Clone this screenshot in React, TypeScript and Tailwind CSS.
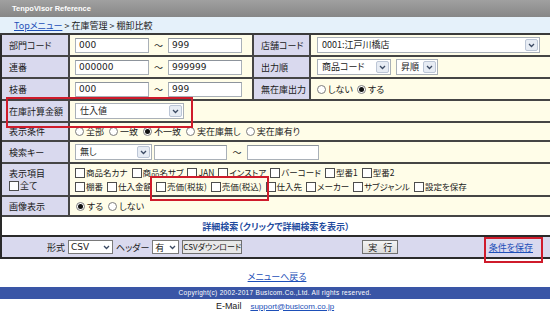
import type { ReactNode } from 'react'

function TextBox({ value, className }: { value?: string; className: string }) {
  return (
    <div
      className={`flex h-[15px] items-center border border-[#a9b0b8] border-t-[#8d949c] bg-white pl-[3px] font-['DejaVu_Sans',sans-serif] text-[9px] leading-[12px] text-[#222] ${className}`}
    >
      {value}
    </div>
  )
}

function Chevron() {
  return (
    <svg width="7" height="5" viewBox="0 0 7 5">
      <path d="M1 1 L3.5 3.5 L6 1" fill="none" stroke="#3b4a63" strokeWidth="1.3" />
    </svg>
  )
}

function Select({ value, className }: { value: string; className: string }) {
  return (
    <div className={`flex h-[16px] items-center border border-[#a9b0b8] bg-white pl-[4px] text-[9px] leading-[12px] text-[#222] ${className}`}>
      <span className="flex-1 whitespace-nowrap">{value}</span>
      <span className="mr-[1px] flex h-[12px] w-[13px] shrink-0 items-center justify-center rounded-[2px] border border-[#bcc6d6] bg-[#e7ecf4]">
        <Chevron />
      </span>
    </div>
  )
}

function Radio({ checked, label }: { checked?: boolean; label: string }) {
  return (
    <span className="flex items-center gap-[2px]">
      <span className="flex h-[9px] w-[9px] items-center justify-center rounded-full border border-[#7d7d7d] bg-white">
        {checked && <span className="h-[5px] w-[5px] rounded-full bg-[#111]" />}
      </span>
      <span>{label}</span>
    </span>
  )
}

function Check({ label }: { label: string }) {
  return (
    <span className="flex items-center gap-[1px]">
      <span className="h-[10px] w-[10px] border border-[#4d4d4d] bg-white" />
      <span>{label}</span>
    </span>
  )
}

function Label({ children, className = 'w-[68px]' }: { children: ReactNode; className?: string }) {
  return (
    <div className={`flex shrink-0 items-center border-r-2 border-[#454545] bg-[#d9d9ee] pl-[7px] text-[9px] text-[#1a1a1a] ${className}`}>
      {children}
    </div>
  )
}

function Row({ h, children }: { h: string; children: ReactNode }) {
  return <div className={`flex border-b-2 border-[#454545] bg-[#fffde8] ${h}`}>{children}</div>
}

function RangeInputs({ from, to }: { from: string; to: string }) {
  return (
    <div className="flex w-[184px] shrink-0 items-center border-r-2 border-[#454545] pl-[5px]">
      <TextBox value={from} className="w-[74px]" />
      <span className="w-[19px] text-center text-[9px]">〜</span>
      <TextBox value={to} className="w-[74px]" />
    </div>
  )
}

export default function App() {
  return (
    <div className="relative h-[319px] w-[550px] overflow-hidden bg-white font-['Noto_Sans_CJK_JP',sans-serif] leading-none text-[#1a1a1a] [font-feature-settings:'palt']">
      <div className="flex h-[17px] items-center bg-gradient-to-b from-[#a0a0a0] to-[#878787] pl-[12px] font-['Liberation_Sans',sans-serif] text-[7.5px] font-bold text-white">
        TenpoVisor Reference
      </div>
      <div className="flex h-[18px] items-center border-b-2 border-[#3a3a3a] bg-[#e5f1fa] pl-[14px] text-[9px]">
        <a className="text-[#1d4fb8] underline">Topメニュー</a>
        <span className="ml-[2px]">&gt; 在庫管理 &gt; 棚卸比較</span>
      </div>

      <div className="border-l-2 border-[#2a2a2a]">
        <Row h="h-[22px]">
          <Label>部門コード</Label>
          <RangeInputs from="000" to="999" />
          <Label className="w-[57px]">店舗コード</Label>
          <div className="flex flex-1 items-center pl-[6px]">
            <Select value="0001:江戸川橋店" className="w-[223px]" />
          </div>
        </Row>
        <Row h="h-[22px]">
          <Label>連番</Label>
          <RangeInputs from="000000" to="999999" />
          <Label className="w-[57px]">出力順</Label>
          <div className="flex flex-1 items-center gap-[5px] pl-[6px]">
            <Select value="商品コード" className="w-[74px]" />
            <Select value="昇順" className="w-[42px]" />
          </div>
        </Row>
        <Row h="h-[22px]">
          <Label>枝番</Label>
          <RangeInputs from="000" to="999" />
          <Label className="w-[57px]">無在庫出力</Label>
          <div className="flex flex-1 items-center gap-[4px] pl-[6px] text-[9px]">
            <Radio label="しない" />
            <Radio checked label="する" />
          </div>
        </Row>
        <Row h="h-[22px]">
          <Label>在庫計算金額</Label>
          <div className="flex flex-1 items-center pl-[5px]">
            <Select value="仕入値" className="w-[109px]" />
          </div>
        </Row>
        <Row h="h-[19px]">
          <Label>表示条件</Label>
          <div className="flex flex-1 items-center gap-[5px] pl-[5px] text-[9px]">
            <Radio label="全部" />
            <Radio label="一致" />
            <Radio checked label="不一致" />
            <Radio label="実在庫無し" />
            <Radio label="実在庫有り" />
          </div>
        </Row>
        <Row h="h-[22px]">
          <Label>検索キー</Label>
          <div className="flex flex-1 items-center pl-[5px]">
            <Select value="無し" className="w-[77px]" />
            <TextBox className="ml-[2px] w-[73px]" />
            <span className="w-[20px] text-center text-[9px]">〜</span>
            <TextBox className="w-[72px]" />
          </div>
        </Row>
        <Row h="h-[33px]">
          <Label>
            <div className="flex flex-col gap-[3px]">
              <span>表示項目</span>
              <Check label="全て" />
            </div>
          </Label>
          <div className="flex flex-1 flex-col justify-center gap-[4px] pl-[5px] text-[8.5px]">
            <div className="flex gap-[4px]">
              <Check label="商品名カナ" />
              <Check label="商品名サブ" />
              <Check label="JAN" />
              <Check label="インストア" />
              <Check label="バーコード" />
              <Check label="型番1" />
              <Check label="型番2" />
            </div>
            <div className="flex gap-[4px]">
              <Check label="棚番" />
              <Check label="仕入金額" />
              <Check label="売価(税抜)" />
              <Check label="売価(税込)" />
              <Check label="仕入先" />
              <Check label="メーカー" />
              <Check label="サブジャンル" />
              <Check label="設定を保存" />
            </div>
          </div>
        </Row>
        <Row h="h-[20px]">
          <Label>画像表示</Label>
          <div className="flex flex-1 items-center gap-[5px] pl-[6px] text-[9px]">
            <Radio checked label="する" />
            <Radio label="しない" />
          </div>
        </Row>
        <div className="flex h-[20px] items-center justify-center border-b-2 border-[#2a2a2a] bg-white text-[9px] font-bold text-[#1f4b9e]">
          詳細検索（クリックで詳細検索を表示）
        </div>
        <div className="flex h-[22px] items-center whitespace-nowrap border-b-2 border-[#2a2a2a] bg-[#d9d9ee] text-[9px]">
          <div className="flex w-[240px] shrink-0 items-center pl-[45px]">
            <span className="shrink-0">形式</span>
            <div className="ml-[3px] flex h-[14px] w-[45px] shrink-0 items-center justify-between border border-[#7a7a7a] bg-white px-[2px] font-['DejaVu_Sans',sans-serif] text-[9px]">
              CSV
              <Chevron />
            </div>
            <span className="ml-[3px] shrink-0">ヘッダー</span>
            <div className="ml-[3px] flex h-[14px] w-[27px] shrink-0 items-center justify-between border border-[#7a7a7a] bg-white px-[2px]">
              有
              <Chevron />
            </div>
            <div className="ml-[3px] flex h-[14px] w-[60px] shrink-0 items-center justify-center border border-[#707070] bg-[#e8e8e8] text-[8px]">
              CSVダウンロード
            </div>
          </div>
          <div className="flex flex-1 justify-center pl-[30px]">
            <div className="flex h-[14px] w-[36px] items-center justify-center gap-[6px] border border-[#707070] bg-gradient-to-b from-[#f4f4f4] to-[#dcdcdc]">
              <span>実</span>
              <span>行</span>
            </div>
          </div>
          <a className="mr-[17px] text-[9px] text-[#1d4fb8] underline">条件を保存</a>
        </div>
      </div>

      <div className="mt-[13px] flex justify-center pl-[4px] text-[9px]">
        <a className="text-[#1d4fb8] underline">メニューへ戻る</a>
      </div>
      <div className="mt-[6px] flex h-[12px] items-center justify-center bg-[#3a56a6] font-['Liberation_Sans',sans-serif] text-[6.5px] tracking-[0.3px] text-white">
        Copyright(c) 2002-2017 Busicom.Co.,Ltd. All rights reserved.
      </div>
      <div className="mt-[3px] flex items-center justify-center gap-[9px] font-['Liberation_Sans',sans-serif]">
        <span className="text-[9px] text-[#222]">E-Mail</span>
        <a className="text-[8px] text-[#1d4fb8] underline">support@busicom.co.jp</a>
      </div>

      <div className="absolute left-[6px] top-[97px] h-[31px] w-[187px] border-2 border-[#cf1b2b]" />
      <div className="absolute left-[150px] top-[176px] h-[25px] w-[119px] border-2 border-[#cf1b2b]" />
      <div className="absolute left-[484px] top-[237px] h-[26px] w-[59px] border-2 border-[#cf1b2b]" />
    </div>
  )
}
